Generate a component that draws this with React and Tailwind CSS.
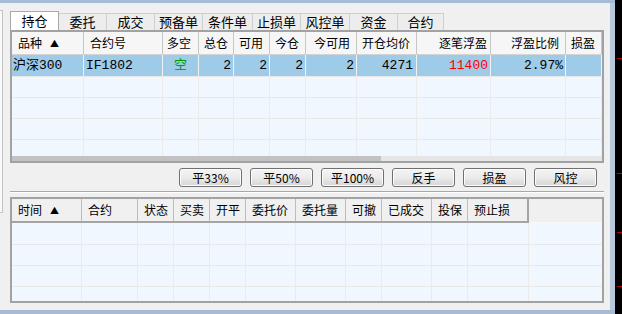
import * as React from "react";

const UI = "font-['Noto_Sans_CJK_SC',sans-serif]";
const DATA = "font-['Liberation_Mono','Noto_Sans_CJK_SC',monospace]";

const tabs = [
  { t: "持仓", w: 49 },
  { t: "委托", w: 48 },
  { t: "成交", w: 48 },
  { t: "预备单", w: 48 },
  { t: "条件单", w: 50 },
  { t: "止损单", w: 48 },
  { t: "风控单", w: 49 },
  { t: "资金", w: 48 },
  { t: "合约", w: 46 },
];

const upperCols = [
  { t: "品种", w: 72, h: "justify-start pl-[6px]", sort: true },
  { t: "合约号", w: 79, h: "justify-start pl-[6px]" },
  { t: "多空", w: 36, h: "justify-start pl-[4px]" },
  { t: "总仓", w: 35, h: "justify-end pr-[5px]" },
  { t: "可用", w: 36, h: "justify-end pr-[6px]" },
  { t: "今仓", w: 36, h: "justify-end pr-[6px]" },
  { t: "今可用", w: 51, h: "justify-end pr-[6px]" },
  { t: "开仓均价", w: 60, h: "justify-end pr-[6px]" },
  { t: "逐笔浮盈", w: 74, h: "justify-end pr-[3px]" },
  { t: "浮盈比例", w: 75, h: "justify-end pr-[6px]" },
  { t: "损盈", w: 36, h: "justify-start pl-[5px]" },
];

// first (selected) position row
const position = [
  { v: "沪深300", a: "justify-start pl-[1px]" },
  { v: "IF1802", a: "justify-start pl-[2px]" },
  { v: "空", a: "justify-center text-[#009a00]" },
  { v: "2", a: "justify-end pr-[2px]" },
  { v: "2", a: "justify-end pr-[2px]" },
  { v: "2", a: "justify-end pr-[2px]" },
  { v: "2", a: "justify-end pr-[2px]" },
  { v: "4271", a: "justify-end pr-[3px]" },
  { v: "11400", a: "justify-end pr-[2px] text-[#ff0000]" },
  { v: "2.97%", a: "justify-end pr-[2px]" },
  { v: "", a: "" },
];

const lowerCols = [
  { t: "时间", w: 70, sort: true },
  { t: "合约", w: 56 },
  { t: "状态", w: 36 },
  { t: "买卖", w: 36 },
  { t: "开平", w: 36 },
  { t: "委托价", w: 50 },
  { t: "委托量", w: 50 },
  { t: "可撤", w: 36 },
  { t: "已成交", w: 50 },
  { t: "投保", w: 36 },
  { t: "预止损", w: 61 },
];

const buttons = ["平33%", "平50%", "平100%", "反手", "损盈", "风控"];

function Sort() {
  return <span className="ml-[8px] text-[9px] leading-none">▲</span>;
}

function UpperTable() {
  return (
    <div className="h-[133px] border-2 border-[#a2a2a2] flex flex-col bg-[#f0f7ff]">
      {/* header */}
      <div className={`flex h-[23px] bg-[#f6f6f6] border-b border-[#d4d4d4] text-[12px] text-black ${UI}`}>
        {upperCols.map((c, i) => (
          <div
            key={i}
            style={{ width: c.w }}
            className={`shrink-0 flex items-center border-r border-[#c6c6c6] ${c.h}`}
          >
            {c.t}
            {c.sort && <Sort />}
          </div>
        ))}
      </div>
      <div className="flex-1 overflow-hidden">
        <div className={`flex h-[21px] bg-[#9ecbe7] text-[13px] text-black ${DATA}`}>
          {position.map((p, i) => (
            <div
              key={i}
              style={{ width: upperCols[i].w }}
              className={`shrink-0 flex items-center border-r border-[#f2f2f2] ${p.a}`}
            >
              {p.v}
            </div>
          ))}
        </div>
        {[0, 1, 2, 3, 4].map((r) => (
          <div key={r} className="flex h-[21px] border-t border-[#e8e8e8]">
            {upperCols.map((c, i) => (
              <div key={i} style={{ width: c.w }} className="shrink-0 border-r border-[#ebebeb]" />
            ))}
          </div>
        ))}
      </div>
      {/* horizontal scrollbar */}
      <div className="flex h-[5px]">
        <div className="w-[369px] bg-[#c2c2c2]" />
        <div className="flex-1 bg-[#e6e6e6]" />
      </div>
    </div>
  );
}

function LowerTable() {
  return (
    <div className="h-[106px] border-2 border-[#a2a2a2] flex flex-col bg-[#f0f7ff]">
      <div className={`flex h-[24px] bg-[#f0f0f0] text-[12px] text-black ${UI}`}>
        <div className="flex border-b-2 border-[#a4a4a4]">
          {lowerCols.map((c, i) => (
            <div
              key={i}
              style={{ width: c.w }}
              className={`shrink-0 flex items-center pl-[6px] ${
                i === lowerCols.length - 1 ? "border-r-2 border-[#a4a4a4]" : "border-r border-[#bdbdbd]"
              }`}
            >
              {c.t}
              {c.sort && <Sort />}
            </div>
          ))}
        </div>
        <div className="flex-1 border-b border-[#f8f8f8]" />
      </div>
      <div className="flex-1 overflow-hidden">
        {[0, 1, 2, 3].map((r) => (
          <div key={r} className={`flex h-[21px] ${r > 0 ? "border-t border-[#e8e8e8]" : ""}`}>
            {lowerCols.map((c, i) => (
              <div key={i} style={{ width: c.w }} className="shrink-0 border-r border-[#ebebeb]" />
            ))}
            <div className="flex-1" />
          </div>
        ))}
      </div>
    </div>
  );
}

export default function App() {
  return (
    <div className={`w-[622px] h-[314px] flex bg-[#f0f0f0] overflow-hidden ${UI}`}>
      <div className="w-[615px] flex flex-col">
        <div className="h-[3px] bg-[#a6bbd4]" />
        <div className="flex-1 flex">
          {/* left neighbour panel edge */}
          <div className="w-[3px] mt-[7px] h-[203px] bg-[#fafafa] border-r border-t border-b border-[#c4c4c4]" />
          <div className="w-[594px] ml-[7px] flex flex-col">
            {/* tabs */}
            <div className="flex h-[19px] mt-[8px] text-[13px] text-black">
              {tabs.map((t, i) => (
                <div
                  key={i}
                  style={{ width: t.w }}
                  className={
                    i === 0
                      ? "shrink-0 flex items-center justify-center bg-white border-l border-t border-r border-[#a8a8a8]"
                      : "shrink-0 flex items-center justify-center mt-[2px] bg-[#ededed] border-t border-r border-[#cfcfcf]"
                  }
                >
                  {t.t}
                </div>
              ))}
            </div>
            <UpperTable />
            {/* action buttons */}
            <div className="flex justify-end gap-[8px] pr-[7px] mt-[5px]">
              {buttons.map((b) => (
                <button
                  key={b}
                  className="w-[63px] h-[19px] flex items-center justify-center rounded-[3px] border border-[#707070] bg-gradient-to-b from-[#f4f4f4] via-[#ebebeb] to-[#d5d5d5] text-[12px] text-black shadow-[inset_0_0_0_1px_#fcfcfc]"
                >
                  {b}
                </button>
              ))}
            </div>
            <div className="mt-[4px] h-[2px] border-t border-b border-t-[#a8a8a8] border-b-white" />
            <div className="mt-[4px]">
              <LowerTable />
            </div>
          </div>
          <div className="w-[6px]" />
          <div className="w-[5px] bg-[#b8c9de]" />
        </div>
        <div className="h-[4px] bg-[#a6bbd4]" />
      </div>
      {/* dark right edge with red ticks */}
      <div className="w-[7px] bg-black flex flex-col items-end">
        <div className="mt-[58px] h-px w-[5px] bg-[#c00000]" />
        <div className="mt-[114px] h-px w-[5px] bg-[#c00000]" />
        <div className="mt-[58px] h-px w-[5px] bg-[#c00000]" />
        <div className="mt-[53px] h-px w-[5px] bg-[#c00000]" />
      </div>
    </div>
  );
}
